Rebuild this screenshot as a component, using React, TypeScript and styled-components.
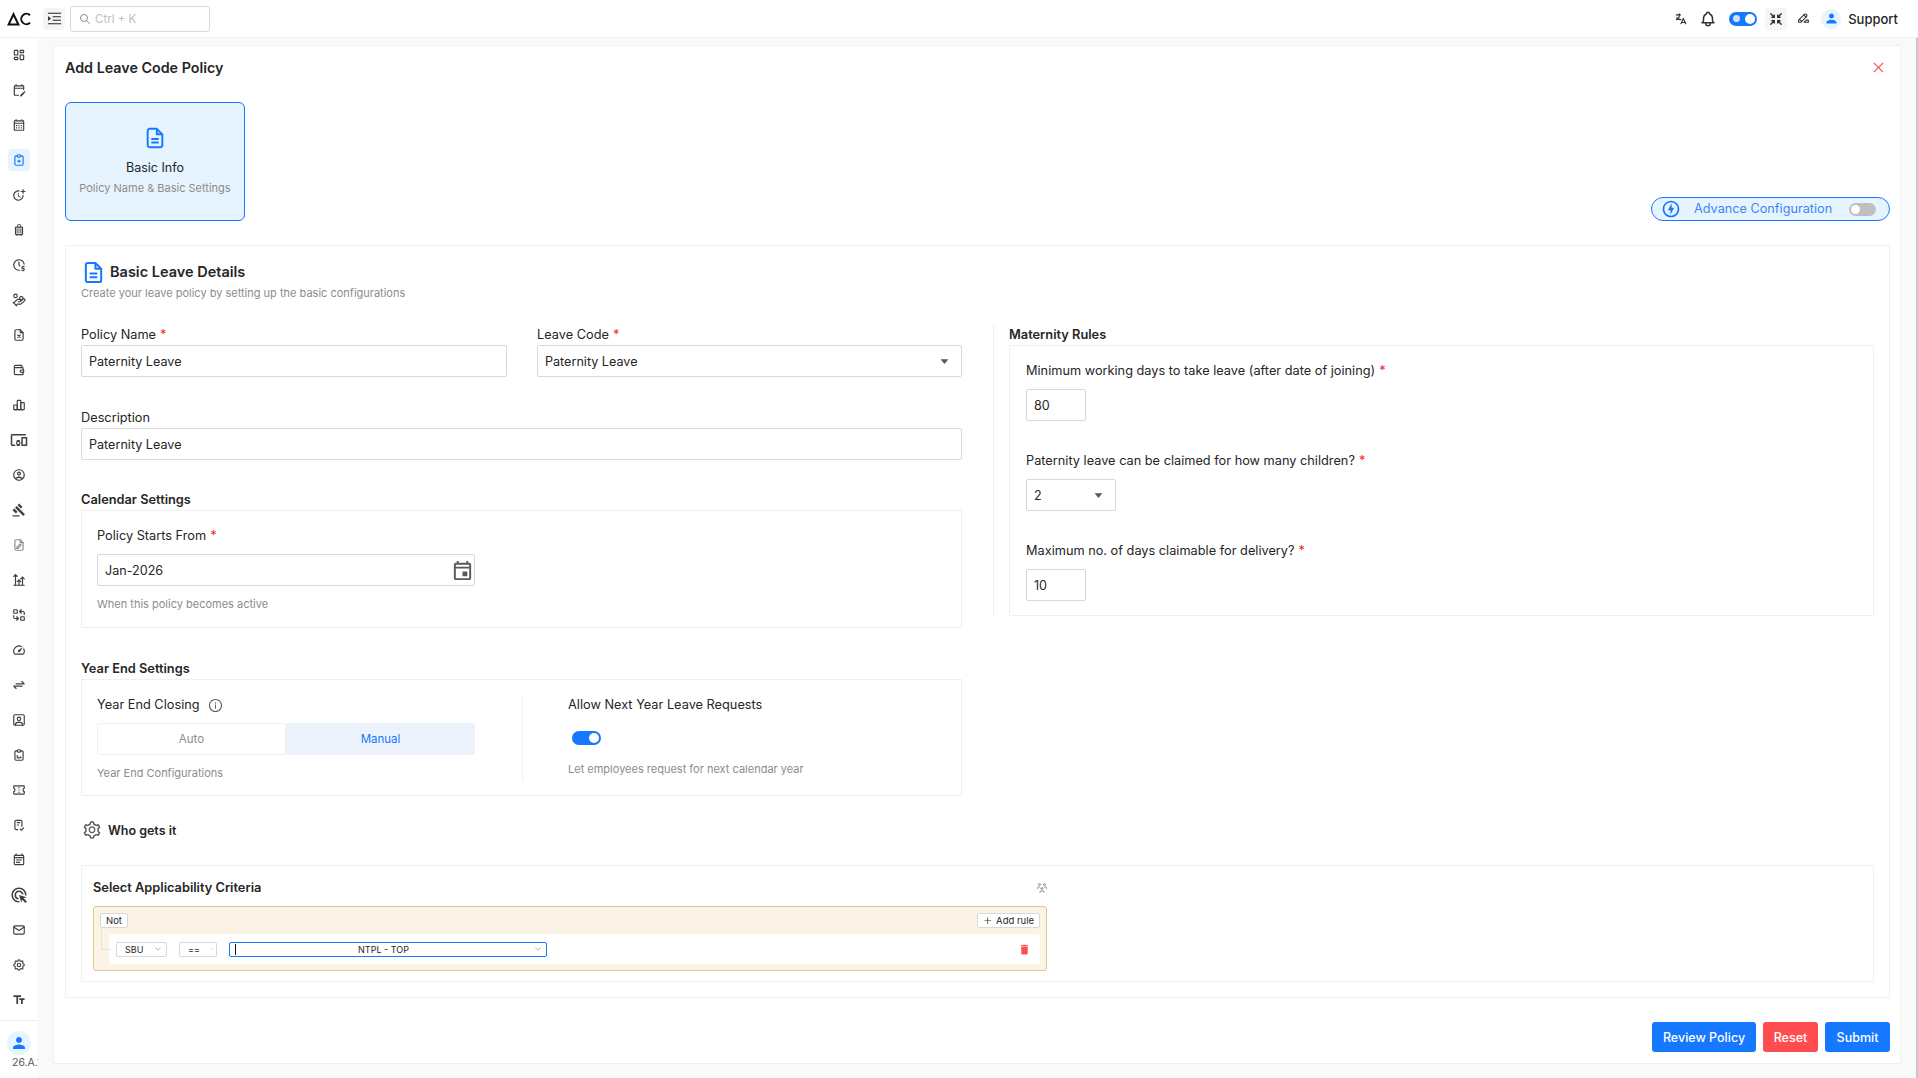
import React from "react";
import styled, { createGlobalStyle } from "styled-components";
import {
  AiFillCaretDown,
  AiOutlineClose,
  AiOutlineInfoCircle,
  AiOutlineMenuUnfold,
  AiOutlinePlus,
  AiOutlineSetting,
} from "react-icons/ai";
import { LuHandCoins } from "react-icons/lu";
import {
  MdAdsClick,
  MdDelete,
  MdOutlineAccountCircle,
  MdOutlineCalendarMonth,
  MdOutlineConfirmationNumber,
  MdOutlineDevicesOther,
  MdOutlineEditCalendar,
  MdOutlineEvent,
  MdOutlineEventNote,
  MdOutlineGavel,
  MdOutlineLuggage,
  MdOutlineMoreTime,
  MdOutlineOfflineBolt,
  MdOutlineSpeed,
  MdPerson,
  MdTextFields,
} from "react-icons/md";
import {
  TbArrowsExchange,
  TbBell,
  TbChartArrowsVertical,
  TbChartBar,
  TbChecklist,
  TbChevronDown,
  TbClipboardData,
  TbClipboardPlus,
  TbClockDollar,
  TbFilePencil,
  TbFileX,
  TbHighlight,
  TbLanguage,
  TbLayoutDashboard,
  TbMail,
  TbReplace,
  TbSearch,
  TbSettings,
  TbUserSquare,
  TbUsersGroup,
  TbWallet,
} from "react-icons/tb";

const GlobalStyle = createGlobalStyle`
  html, body {
    margin: 0;
    height: 100%;
    overflow: hidden;
    background: #f9f9f9;
  }
  body {
    font-family: "Inter", "Liberation Sans", sans-serif;
    color: #262626;
  }
  * {
    box-sizing: border-box;
  }
`;

const Shell = styled.div`
  display: flex;
  flex-direction: column;
  width: 1918px;
  height: 1078px;
`;

/* top bar */
const TopBar = styled.header`
  display: flex;
  align-items: center;
  height: 38px;
  flex: none;
  padding-right: 20px;
  background: #fff;
  border-bottom: 1px solid #f0f0f0;
`;

const LogoCell = styled.div`
  display: flex;
  align-items: center;
  justify-content: center;
  width: 43px;
  height: 100%;
  padding-right: 6px;
`;

const IconTile = styled.div<{ $size: number }>`
  display: flex;
  align-items: center;
  justify-content: center;
  width: 22px;
  height: 22px;
  border-radius: 4px;
  background: #f5f5f5;
  color: #262626;
  font-size: ${({ $size }) => $size}px;
`;

const SearchBox = styled.div`
  display: flex;
  align-items: center;
  gap: 4px;
  width: 140px;
  height: 26px;
  margin-left: 5px;
  padding-left: 8px;
  border: 1px solid #d9d9d9;
  border-radius: 3px;
  color: #bfbfbf;
  font-size: 11.5px;

  svg {
    color: #8c8c8c;
    font-size: 12px;
  }
`;

const TopActions = styled.div`
  display: flex;
  align-items: center;
  margin-left: auto;
`;

const TopIcon = styled.div<{ $gap?: number; $size?: number }>`
  display: flex;
  align-items: center;
  justify-content: center;
  margin-left: ${({ $gap }) => $gap ?? 0}px;
  color: #333;
  font-size: ${({ $size }) => $size ?? 13}px;
`;

const ThemeToggle = styled.div`
  display: flex;
  align-items: center;
  justify-content: space-between;
  width: 28px;
  height: 14px;
  margin-left: 12px;
  padding: 0 2px 0 4px;
  border-radius: 7px;
  background: #1677ff;

  &::before {
    content: "";
    width: 7px;
    height: 7px;
    border-radius: 50%;
    background: #cfe2ff;
  }

  &::after {
    content: "";
    width: 10px;
    height: 10px;
    border-radius: 50%;
    background: #fff;
  }
`;

const Avatar = styled.div<{ $size: number }>`
  display: flex;
  align-items: center;
  justify-content: center;
  width: ${({ $size }) => $size}px;
  height: ${({ $size }) => $size}px;
  flex: none;
  border-radius: 50%;
  background: #e6f4ff;
  color: #1677ff;
  font-size: ${({ $size }) => Math.round($size * 0.75)}px;
`;

const SupportName = styled.span`
  margin-left: 7px;
  font-size: 13px;
  font-weight: 500;
  color: #262626;
`;

/* page body */
const Body = styled.div`
  display: flex;
  flex: 1;
  min-height: 0;
`;

const Sidebar = styled.aside`
  display: flex;
  flex-direction: column;
  width: 38px;
  flex: none;
  background: #fff;
  overflow: hidden;
`;

const NavList = styled.nav`
  display: flex;
  flex-direction: column;
  flex: 1;
  margin-top: -1px;
`;

const NavItem = styled.div<{ $active?: boolean; $size?: number; $muted?: boolean }>`
  display: flex;
  align-items: center;
  justify-content: center;
  height: 35px;
  flex: none;
  color: ${({ $active, $muted }) => ($active ? "#1677ff" : $muted ? "#8c8c8c" : "#3f3f3f")};
  font-size: ${({ $size }) => $size ?? 14}px;

  span {
    display: flex;
    align-items: center;
    justify-content: center;
    width: 22px;
    height: 22px;
    border-radius: 4px;
    background: ${({ $active }) => ($active ? "#e6f4ff" : "transparent")};
  }
`;

const SideFooter = styled.div`
  display: flex;
  flex-direction: column;
  align-items: center;
  height: 58px;
  flex: none;
  padding-top: 10px;
  border-top: 1px solid #f0f0f0;
`;

const Version = styled.div`
  width: 38px;
  margin-top: 1px;
  padding-left: 12px;
  color: #595959;
  font-size: 10.5px;
  line-height: 14px;
  white-space: nowrap;
  overflow: hidden;
`;

const Main = styled.main`
  flex: 1;
  min-width: 0;
  padding: 7px 15px 14px 15px;
  border-right: 2px solid #c4c4c4;
`;

const Card = styled.div`
  display: flex;
  flex-direction: column;
  height: 100%;
  padding: 11px 10px 11px 11px;
  background: #fff;
  border: 1px solid #f0f0f0;
`;

const TitleRow = styled.div`
  display: flex;
  align-items: center;
  justify-content: space-between;
  height: 21px;
  padding-right: 4px;
`;

const PageTitle = styled.h1`
  margin: 0;
  font-size: 14.3px;
  font-weight: 600;
  color: #262626;
`;

const CloseButton = styled.div`
  display: flex;
  color: #ff4d4f;
  font-size: 15px;
`;

const StepRow = styled.div`
  display: flex;
  align-items: flex-end;
  justify-content: space-between;
  margin-top: 24px;
`;

const StepCard = styled.div`
  display: flex;
  flex-direction: column;
  align-items: center;
  width: 180px;
  height: 119px;
  padding-top: 24px;
  background: #e6f4ff;
  border: 1px solid #1677ff;
  border-radius: 6px;
  color: #1677ff;
  font-size: 22px;
`;

const StepName = styled.div`
  margin-top: 10px;
  color: #262626;
  font-size: 12.5px;
  line-height: 18px;
`;

const StepHint = styled.div`
  margin-top: 4px;
  color: #8c8c8c;
  font-size: 11px;
  line-height: 14px;
`;

const AdvancePill = styled.div`
  display: flex;
  align-items: center;
  width: 239px;
  height: 24px;
  padding: 0 13px 0 9px;
  background: #e6f4ff;
  border: 1px solid #1677ff;
  border-radius: 12px;
  color: #1677ff;
  font-size: 20px;
`;

const AdvanceLabel = styled.span`
  margin-left: 13px;
  padding-bottom: 1px;
  color: #3f86f0;
  font-size: 12.7px;
`;

const Switch = styled.div<{ $on?: boolean; $width: number; $height: number }>`
  display: flex;
  align-items: center;
  justify-content: ${({ $on }) => ($on ? "flex-end" : "flex-start")};
  width: ${({ $width }) => $width}px;
  height: ${({ $height }) => $height}px;
  padding: 0 2px;
  border-radius: 8px;
  background: ${({ $on }) => ($on ? "#1677ff" : "#bfbfbf")};

  &::after {
    content: "";
    width: ${({ $height }) => $height - 4}px;
    height: ${({ $height }) => $height - 4}px;
    border-radius: 50%;
    background: #fff;
  }
`;

const PillSwitch = styled(Switch)`
  margin-left: auto;
`;

const Panel = styled.section`
  margin-top: 24px;
  height: 753px;
  padding: 16px 15px 15px;
  border: 1px solid #f0f0f0;
`;

const PanelHead = styled.div`
  display: flex;
  align-items: center;
  gap: 5px;
  height: 20px;
  padding-left: 1px;
  color: #1677ff;
  font-size: 23px;
`;

const PanelTitle = styled.h2`
  margin: 0;
  padding-bottom: 1px;
  color: #262626;
  font-size: 14.5px;
  font-weight: 600;
`;

const PanelHint = styled.div`
  margin-top: 4px;
  color: #8c8c8c;
  font-size: 11px;
  line-height: 14px;
`;

const FormGrid = styled.div`
  display: grid;
  grid-template-columns: 881px 1fr;
  column-gap: 31px;
  margin-top: 25px;
`;

const LeftColumn = styled.div`
  display: flex;
  flex-direction: column;
`;

const RightColumn = styled.div`
  align-self: start;
  padding-left: 15px;
  border-left: 1px solid #f0f0f0;
`;

const TwoFields = styled.div`
  display: grid;
  grid-template-columns: 426px 425px;
  column-gap: 30px;
`;

const Label = styled.div`
  padding-top: 2px;
  font-size: 12.75px;
  line-height: 16px;
  color: #262626;

  em {
    margin-left: 4px;
    color: #f5222d;
    font-style: normal;
  }
`;

const Field = styled.div<{ $top?: number }>`
  margin-top: ${({ $top }) => $top ?? 0}px;
`;

const Box = styled.div<{ $width?: number; $gap?: number }>`
  display: flex;
  align-items: center;
  justify-content: space-between;
  width: ${({ $width }) => ($width ? `${$width}px` : "100%")};
  height: 32px;
  margin-top: ${({ $gap }) => $gap ?? 2}px;
  padding: 0 7px;
  background: #fff;
  border: 1px solid #d9d9d9;
  border-radius: 2px;
  color: #262626;
  font-size: 12.6px;
`;

const SelectCaret = styled(AiFillCaretDown)`
  margin-right: 4px;
  color: #595959;
  font-size: 11px;
`;

const CalendarIcon = styled(MdOutlineEvent)`
  margin-right: -7px;
  color: #595959;
  font-size: 23px;
`;

const SectionHeading = styled.div<{ $top?: number }>`
  margin-top: ${({ $top }) => $top ?? 0}px;
  margin-bottom: 2px;
  padding-top: 2px;
  font-size: 12.8px;
  font-weight: 600;
  line-height: 16px;
  color: #262626;
`;

const Group = styled.div`
  border: 1px solid #f0f0f0;
`;

const CalendarGroup = styled(Group)`
  height: 118px;
  padding: 15px 15px 0;
  width: 100%;
`;

const CalendarField = styled.div`
  width: 378px;
`;

const Hint = styled.div<{ $top?: number }>`
  margin-top: ${({ $top }) => $top ?? 11}px;
  color: #8c8c8c;
  font-size: 11px;
  line-height: 14px;
`;

const YearGroup = styled(Group)`
  display: grid;
  grid-template-columns: 378px 1fr;
  column-gap: 47px;
  height: 117px;
  padding: 15px 15px 14px;
`;

const YearRight = styled.div`
  padding-left: 45px;
  border-left: 1px solid #f0f0f0;
`;

const InfoLabel = styled(Label)`
  display: flex;
  align-items: center;
  gap: 8px;

  svg {
    color: #595959;
    font-size: 15px;
  }
`;

const Segments = styled.div`
  display: grid;
  grid-template-columns: 189px 189px;
  height: 32px;
  margin-top: 10px;
`;

const Segment = styled.div<{ $active?: boolean }>`
  display: flex;
  align-items: center;
  justify-content: center;
  border: 1px solid ${({ $active }) => ($active ? "#edf3fd" : "#f0f0f0")};
  border-radius: 2px;
  background: ${({ $active }) => ($active ? "#edf3fd" : "#fff")};
  color: ${({ $active }) => ($active ? "#1677ff" : "#8c8c8c")};
  font-size: 11.5px;
`;

const NextYearSwitch = styled(Switch)`
  margin: 18px 0 0 4px;
`;

const MaternityGroup = styled(Group)`
  height: 271px;
  padding: 15px 16px 0;
`;

const WhoRow = styled.div`
  display: flex;
  align-items: center;
  gap: 6px;
  height: 20px;
  margin-top: 24px;
  padding-left: 1px;
  font-size: 12.5px;
  font-weight: 600;
  color: #262626;

  svg {
    color: #595959;
    font-size: 20px;
  }
`;

const CriteriaGroup = styled(Group)`
  height: 117px;
  margin-top: 25px;
  padding: 12px 11px 0;
`;

const CriteriaInner = styled.div`
  width: 954px;
`;

const CriteriaHead = styled.div`
  display: flex;
  align-items: center;
  justify-content: space-between;
  height: 18px;
  padding: 1px 0 0;
  font-size: 12.8px;
  font-weight: 600;

  svg {
    margin-right: -1px;
    color: #8c8c8c;
    font-size: 12px;
    font-weight: 400;
  }
`;

const QueryBox = styled.div`
  height: 65px;
  margin-top: 10px;
  padding: 6px;
  background: #fbf4e6;
  border: 1px solid #dcc88c;
  border-radius: 3px;
`;

const QueryTop = styled.div`
  display: flex;
  justify-content: space-between;
  height: 15px;
`;

const MiniButton = styled.div`
  display: flex;
  align-items: center;
  justify-content: center;
  gap: 4px;
  height: 15px;
  padding: 0 5px;
  background: #fff;
  border: 1px solid #d9d9d9;
  border-radius: 2px;
  color: #262626;
  font-size: 9.5px;
`;

const RuleRow = styled.div`
  position: relative;
  display: flex;
  align-items: center;
  gap: 12px;
  height: 30px;
  margin: 6px 0 0 9px;
  padding: 0 9px 0 7px;
  background: #fff;
  border-radius: 3px;

  &::before {
    content: "";
    position: absolute;
    left: -8px;
    top: -6px;
    width: 8px;
    height: 21px;
    border-left: 1px solid #ece3cd;
    border-bottom: 1px solid #ece3cd;
  }
`;

const RuleSelect = styled.div<{ $width: number; $focused?: boolean }>`
  display: flex;
  align-items: center;
  justify-content: ${({ $focused }) => ($focused ? "center" : "flex-start")};
  gap: 10px;
  position: relative;
  width: ${({ $width }) => $width}px;
  height: 15px;
  padding: ${({ $focused }) => ($focused ? "0 18px 0 9px" : "0 2px 0 8px")};
  border: 1px solid ${({ $focused }) => ($focused ? "#1677ff" : "#d9d9d9")};
  border-radius: 2px;
  color: #262626;
  font-size: 9px;

  svg {
    color: #a6a6a6;
    font-size: 10px;
  }
`;

const Caret = styled.i`
  position: absolute;
  left: 5px;
  top: 1px;
  width: 1px;
  height: 11px;
  background: #111;
`;

const ValueChevron = styled.span`
  position: absolute;
  right: 3px;
  display: flex;
`;

const TrashButton = styled.div`
  display: flex;
  margin-left: auto;
  color: #ff4d4f;
  font-size: 13px;
`;

const Footer = styled.div`
  display: flex;
  justify-content: flex-end;
  gap: 7px;
  margin-top: 24px;
`;

const ActionButton = styled.div<{ $danger?: boolean; $width: number }>`
  display: flex;
  align-items: center;
  justify-content: center;
  width: ${({ $width }) => $width}px;
  height: 30px;
  border-radius: 3px;
  background: ${({ $danger }) => ($danger ? "#ff4d4f" : "#1677ff")};
  color: #fff;
  font-size: 12.5px;
  font-weight: 500;
`;

const FileIcon: React.FC = () => (
  <svg width="1em" height="1em" viewBox="0 0 24 24" fill="none" stroke="currentColor" strokeWidth="2.1" strokeLinejoin="round">
    <path d="M6 2h8l6 6v12a2 2 0 0 1-2 2H6a2 2 0 0 1-2-2V4a2 2 0 0 1 2-2z" />
    <path d="M14 2v6h6" />
    <path d="M8 13h8M8 17h8" />
  </svg>
);

const LogoMark: React.FC = () => (
  <svg width="24" height="14" viewBox="0 0 24 14" fill="none" stroke="#111" strokeWidth="2">
    <path d="M6.5 2.2 L1.6 12.6 H11.4 Z" />
    <path d="M23 3.2 A5.2 5.2 0 1 0 23 10.8" />
  </svg>
);

const CompressIcon: React.FC = () => (
  <svg width="1em" height="1em" viewBox="0 0 24 24" fill="none" stroke="currentColor" strokeWidth="2.2" strokeLinecap="round">
    <path d="M3 3l5 5M9 5v4H5M21 3l-5 5M15 5v4h4M3 21l5-5M9 19v-4H5M21 21l-5-5M15 19v-4h4" />
  </svg>
);

type TNavEntry = { icon: React.ReactNode; active?: boolean; size?: number; muted?: boolean };

const navEntries: TNavEntry[] = [
  { icon: <TbLayoutDashboard /> },
  { icon: <MdOutlineEditCalendar /> },
  { icon: <MdOutlineCalendarMonth /> },
  { icon: <TbClipboardPlus />, active: true },
  { icon: <MdOutlineMoreTime /> },
  { icon: <MdOutlineLuggage /> },
  { icon: <TbClockDollar /> },
  { icon: <LuHandCoins /> },
  { icon: <TbFileX /> },
  { icon: <TbWallet /> },
  { icon: <TbChartBar /> },
  { icon: <MdOutlineDevicesOther />, size: 18 },
  { icon: <MdOutlineAccountCircle /> },
  { icon: <MdOutlineGavel /> },
  { icon: <TbFilePencil />, muted: true },
  { icon: <TbChartArrowsVertical /> },
  { icon: <TbReplace /> },
  { icon: <MdOutlineSpeed /> },
  { icon: <TbArrowsExchange /> },
  { icon: <TbUserSquare /> },
  { icon: <TbClipboardData /> },
  { icon: <MdOutlineConfirmationNumber /> },
  { icon: <TbChecklist /> },
  { icon: <MdOutlineEventNote /> },
  { icon: <MdAdsClick />, size: 18 },
  { icon: <TbMail /> },
  { icon: <TbSettings /> },
  { icon: <MdTextFields /> },
];

export default function App() {
  return (
    <Shell>
      <GlobalStyle />
      <TopBar>
        <LogoCell>
          <LogoMark />
        </LogoCell>
        <IconTile $size={17}>
          <AiOutlineMenuUnfold />
        </IconTile>
        <SearchBox>
          <TbSearch />
          Ctrl + K
        </SearchBox>
        <TopActions>
          <TopIcon $size={14}>
            <TbLanguage />
          </TopIcon>
          <TopIcon $gap={11} $size={18}>
            <TbBell />
          </TopIcon>
          <ThemeToggle />
          <TopIcon $gap={8}>
            <IconTile $size={14}>
              <CompressIcon />
            </IconTile>
          </TopIcon>
          <TopIcon $gap={10} $size={13}>
            <TbHighlight />
          </TopIcon>
          <TopIcon $gap={11}>
            <Avatar $size={20}>
              <MdPerson />
            </Avatar>
          </TopIcon>
          <SupportName>Support</SupportName>
        </TopActions>
      </TopBar>
      <Body>
        <Sidebar>
          <NavList>
            {navEntries.map((entry, index) => (
              <NavItem key={index} $active={entry.active} $size={entry.size} $muted={entry.muted}>
                <span>{entry.icon}</span>
              </NavItem>
            ))}
          </NavList>
          <SideFooter>
            <Avatar $size={24}>
              <MdPerson />
            </Avatar>
            <Version>26.A.1</Version>
          </SideFooter>
        </Sidebar>
        <Main>
          <Card>
            <TitleRow>
              <PageTitle>Add Leave Code Policy</PageTitle>
              <CloseButton>
                <AiOutlineClose />
              </CloseButton>
            </TitleRow>
            <StepRow>
              <StepCard>
                <FileIcon />
                <StepName>Basic Info</StepName>
                <StepHint>Policy Name &amp; Basic Settings</StepHint>
              </StepCard>
              <AdvancePill>
                <MdOutlineOfflineBolt />
                <AdvanceLabel>Advance Configuration</AdvanceLabel>
                <PillSwitch $width={27} $height={13} />
              </AdvancePill>
            </StepRow>
            <Panel>
              <PanelHead>
                <FileIcon />
                <PanelTitle>Basic Leave Details</PanelTitle>
              </PanelHead>
              <PanelHint>Create your leave policy by setting up the basic configurations</PanelHint>
              <FormGrid>
                <LeftColumn>
                  <TwoFields>
                    <Field>
                      <Label>
                        Policy Name<em>*</em>
                      </Label>
                      <Box>Paternity Leave</Box>
                    </Field>
                    <Field>
                      <Label>
                        Leave Code<em>*</em>
                      </Label>
                      <Box>
                        Paternity Leave
                        <SelectCaret />
                      </Box>
                    </Field>
                  </TwoFields>
                  <Field $top={31}>
                    <Label>Description</Label>
                    <Box>Paternity Leave</Box>
                  </Field>
                  <SectionHeading $top={30}>Calendar Settings</SectionHeading>
                  <CalendarGroup>
                    <CalendarField>
                      <Label>
                        Policy Starts From<em>*</em>
                      </Label>
                      <Box $gap={10}>
                        Jan-2026
                        <CalendarIcon />
                      </Box>
                      <Hint>When this policy becomes active</Hint>
                    </CalendarField>
                  </CalendarGroup>
                  <SectionHeading $top={31}>Year End Settings</SectionHeading>
                  <YearGroup>
                    <div>
                      <InfoLabel>
                        Year End Closing
                        <AiOutlineInfoCircle />
                      </InfoLabel>
                      <Segments>
                        <Segment>Auto</Segment>
                        <Segment $active>Manual</Segment>
                      </Segments>
                      <Hint>Year End Configurations</Hint>
                    </div>
                    <YearRight>
                      <Label>Allow Next Year Leave Requests</Label>
                      <NextYearSwitch $on $width={29} $height={14} />
                      <Hint $top={17}>Let employees request for next calendar year</Hint>
                    </YearRight>
                  </YearGroup>
                </LeftColumn>
                <RightColumn>
                  <SectionHeading>Maternity Rules</SectionHeading>
                  <MaternityGroup>
                    <Field>
                      <Label>
                        Minimum working days to take leave (after date of joining)<em>*</em>
                      </Label>
                      <Box $width={60} $gap={10}>
                        80
                      </Box>
                    </Field>
                    <Field $top={30}>
                      <Label>
                        Paternity leave can be claimed for how many children?<em>*</em>
                      </Label>
                      <Box $width={90} $gap={10}>
                        2
                        <SelectCaret />
                      </Box>
                    </Field>
                    <Field $top={30}>
                      <Label>
                        Maximum no. of days claimable for delivery?<em>*</em>
                      </Label>
                      <Box $width={60} $gap={10}>
                        10
                      </Box>
                    </Field>
                  </MaternityGroup>
                </RightColumn>
              </FormGrid>
              <WhoRow>
                <AiOutlineSetting />
                Who gets it
              </WhoRow>
              <CriteriaGroup>
                <CriteriaInner>
                  <CriteriaHead>
                    Select Applicability Criteria
                    <TbUsersGroup />
                  </CriteriaHead>
                  <QueryBox>
                    <QueryTop>
                      <MiniButton>Not</MiniButton>
                      <MiniButton>
                        <AiOutlinePlus />
                        Add rule
                      </MiniButton>
                    </QueryTop>
                    <RuleRow>
                      <RuleSelect $width={51}>
                        SBU
                        <TbChevronDown />
                      </RuleSelect>
                      <RuleSelect $width={38}>
                        ==
                        <TbChevronDown />
                      </RuleSelect>
                      <RuleSelect $width={318} $focused>
                        <Caret />
                        NTPL - TOP
                        <ValueChevron>
                          <TbChevronDown />
                        </ValueChevron>
                      </RuleSelect>
                      <TrashButton>
                        <MdDelete />
                      </TrashButton>
                    </RuleRow>
                  </QueryBox>
                </CriteriaInner>
              </CriteriaGroup>
            </Panel>
            <Footer>
              <ActionButton $width={104}>Review Policy</ActionButton>
              <ActionButton $width={55} $danger>
                Reset
              </ActionButton>
              <ActionButton $width={65}>Submit</ActionButton>
            </Footer>
          </Card>
        </Main>
      </Body>
    </Shell>
  );
}
